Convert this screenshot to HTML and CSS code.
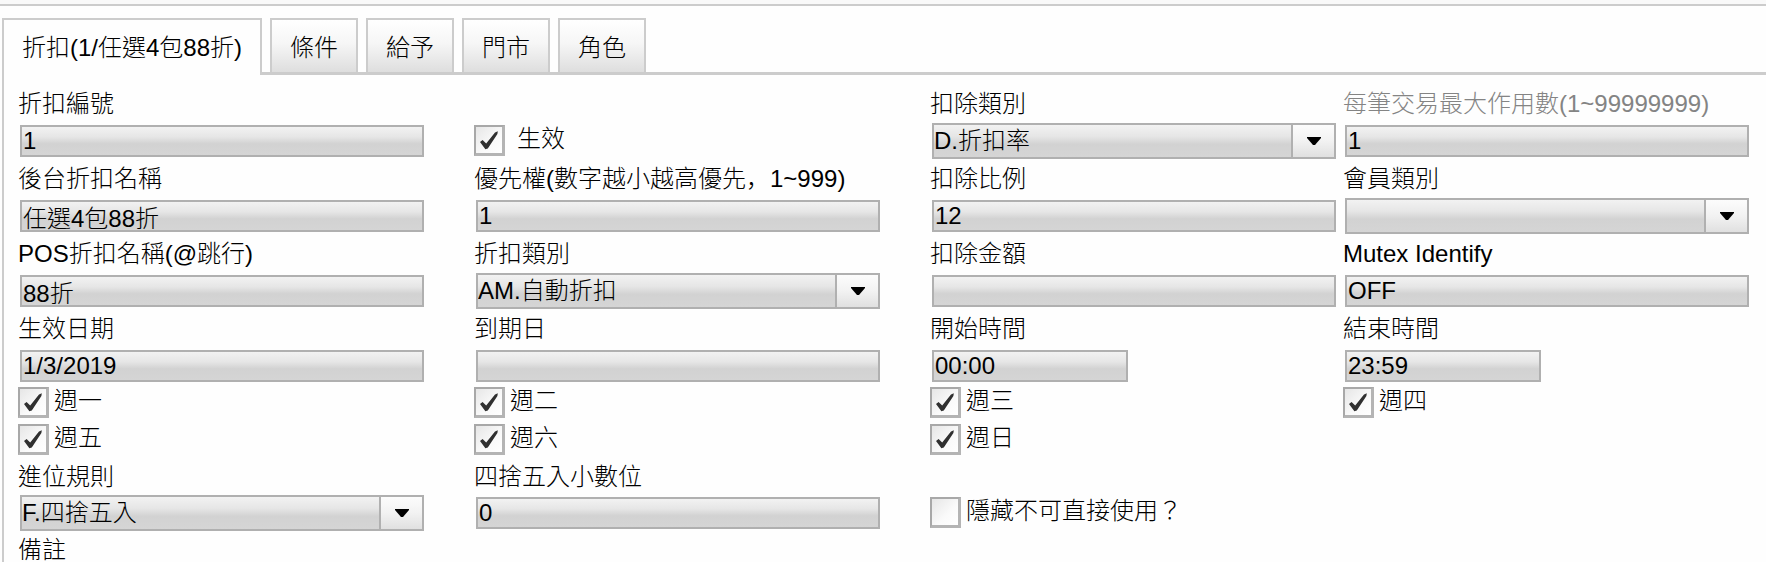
FILE: index.html
```html
<!DOCTYPE html>
<html lang="zh-Hant">
<head>
<meta charset="utf-8">
<title>折扣</title>
<link rel="stylesheet" href="styles.css">
</head>
<body>
<svg class="sprite" aria-hidden="true">
  <symbol id="down" viewBox="0 0 14 8"><path d="M0 0h14v1L8 8H6L0 1z"/></symbol>
</svg>
<header class="topbar"></header>
<nav class="tabs" role="tablist">
  <button class="tab tab--active" role="tab" aria-selected="true">折扣(1/任選4包88折)</button>
  <button class="tab" role="tab">條件</button>
  <button class="tab" role="tab">給予</button>
  <button class="tab" role="tab">門市</button>
  <button class="tab" role="tab">角色</button>
</nav>
<main class="panel">
<form class="form">
  <div class="cell cell--wide">
    <label class="label" for="code">折扣編號</label>
    <div class="control"><input class="field" id="code" value="1"></div>
  </div>
  <div class="cell cell--wide cell--bottom">
    <label class="check check--spaced"><input class="box" type="checkbox" checked><span class="check-text">生效</span></label>
  </div>
  <div class="cell cell--mid">
    <label class="label" for="dtype">扣除類別</label>
    <div class="control combo"><select class="field field--select" id="dtype"><option>D.折扣率</option></select><span class="combo-button"><svg class="arrow"><use href="#down"/></svg></span></div>
  </div>
  <div class="cell">
    <label class="label label--muted" for="max">每筆交易最大作用數(1~99999999)</label>
    <div class="control"><input class="field" id="max" value="1"></div>
  </div>

  <div class="cell cell--wide">
    <label class="label" for="bname">後台折扣名稱</label>
    <div class="control"><input class="field" id="bname" value="任選4包88折"></div>
  </div>
  <div class="cell cell--wide">
    <label class="label" for="prio">優先權(數字越小越高優先<span lang="ja">，</span>1~999)</label>
    <div class="control"><input class="field" id="prio" value="1"></div>
  </div>
  <div class="cell cell--mid">
    <label class="label" for="rate">扣除比例</label>
    <div class="control"><input class="field" id="rate" value="12"></div>
  </div>
  <div class="cell">
    <label class="label" for="member">會員類別</label>
    <div class="control combo"><select class="field field--select" id="member"><option></option></select><span class="combo-button"><svg class="arrow"><use href="#down"/></svg></span></div>
  </div>

  <div class="cell cell--wide">
    <label class="label" for="pname">POS折扣名稱(@跳行)</label>
    <div class="control"><input class="field" id="pname" value="88折"></div>
  </div>
  <div class="cell cell--wide">
    <label class="label" for="kind">折扣類別</label>
    <div class="control combo"><select class="field field--select" id="kind"><option>AM.自動折扣</option></select><span class="combo-button"><svg class="arrow"><use href="#down"/></svg></span></div>
  </div>
  <div class="cell cell--mid">
    <label class="label" for="amount">扣除金額</label>
    <div class="control"><input class="field" id="amount" value=""></div>
  </div>
  <div class="cell">
    <label class="label" for="mutex">Mutex Identify</label>
    <div class="control"><input class="field" id="mutex" value="OFF"></div>
  </div>

  <div class="cell cell--wide">
    <label class="label" for="from">生效日期</label>
    <div class="control"><input class="field" id="from" value="1/3/2019"></div>
  </div>
  <div class="cell cell--wide">
    <label class="label" for="to">到期日</label>
    <div class="control"><input class="field" id="to" value=""></div>
  </div>
  <div class="cell cell--mid">
    <label class="label" for="start">開始時間</label>
    <div class="control"><input class="field field--time" id="start" value="00:00"></div>
  </div>
  <div class="cell">
    <label class="label" for="end">結束時間</label>
    <div class="control"><input class="field field--time" id="end" value="23:59"></div>
  </div>

  <label class="check"><input class="box" type="checkbox" checked><span class="check-text">週一</span></label>
  <label class="check"><input class="box" type="checkbox" checked><span class="check-text">週二</span></label>
  <label class="check"><input class="box" type="checkbox" checked><span class="check-text">週三</span></label>
  <label class="check"><input class="box" type="checkbox" checked><span class="check-text">週四</span></label>
  <label class="check"><input class="box" type="checkbox" checked><span class="check-text">週五</span></label>
  <label class="check"><input class="box" type="checkbox" checked><span class="check-text">週六</span></label>
  <label class="check check--last"><input class="box" type="checkbox" checked><span class="check-text">週日</span></label>

  <div class="cell cell--wide">
    <label class="label label--tight" for="round">進位規則</label>
    <div class="control combo"><select class="field field--select" id="round"><option>F.四捨五入</option></select><span class="combo-button"><svg class="arrow"><use href="#down"/></svg></span></div>
  </div>
  <div class="cell cell--wide">
    <label class="label label--tight" for="digits">四捨五入小數位</label>
    <div class="control"><input class="field" id="digits" value="0"></div>
  </div>
  <div class="cell cell--last cell--bottom">
    <label class="check"><input class="box" type="checkbox"><span class="check-text">隱藏不可直接使用？</span></label>
  </div>

  <div class="cell">
    <span class="label label--tight">備註</span>
  </div>
</form>
</main>
</body>
</html>
```
FILE: styles.css
```css
* {
  box-sizing: border-box;
}

html {
  overflow: hidden;
}

body {
  margin: 0;
  background: #fefefe;
  color: #000;
  font-family: "Liberation Sans", "Noto Sans CJK TC", sans-serif;
  font-size: 24px;
  font-weight: 300;
  line-height: 28px;
}

button,
input,
select {
  font: inherit;
  color: inherit;
}

.sprite {
  display: none;
}

.topbar {
  height: 6px;
  background: #f9f9f9;
  border-bottom: 2px solid #ccc;
}

.tabs {
  display: flex;
  align-items: flex-start;
  gap: 8px;
  padding: 12px 0 0 2px;
}

.tab {
  height: 56px;
  margin: 0;
  padding: 3px 18px 0;
  border: 2px solid #ccc;
  background: linear-gradient(#fff, #f6f6f6 45%, #dedede);
}

.tab--active {
  position: relative;
  height: 57px;
  padding-top: 0;
  border-bottom: 0;
  background: #fefefe;
}

.panel {
  margin: -3px 0 0 2px;
  border-top: 3px solid #ccc;
  border-left: 2px solid #ccc;
  padding: 9px 15px 0 14px;
}

.form {
  display: grid;
  grid-template-columns: 456fr 456fr 413fr 408fr;
}

.cell {
  display: flex;
  flex-direction: column;
  min-width: 0;
  padding-right: 2px;
}

.cell--wide {
  padding-right: 50px;
}

.cell--mid {
  padding-right: 7px;
}

.cell--bottom {
  justify-content: flex-end;
}

.cell--last,
.check--last {
  grid-column: 3 / span 2;
}

.label {
  height: 39px;
  line-height: 39px;
  white-space: nowrap;
}

.label--tight {
  height: 37px;
  line-height: 37px;
}

.label--muted {
  color: #848484;
}

.control {
  display: flex;
  align-items: center;
  height: 36px;
  margin-left: 2px;
}

.field {
  width: 100%;
  height: 32px;
  margin: 0;
  padding: 0 1px;
  border: 2px solid #b0b0b0;
  border-radius: 0;
  outline: 0;
  background: linear-gradient(#f2f2f2, #e6e6e6 35%, #d2d2d2 60%, #d5d5d5);
}

.field--time {
  width: 196px;
}

.combo {
  position: relative;
}

.field--select {
  height: 36px;
  padding: 0 46px 0 0;
  appearance: none;
}

.combo-button {
  position: absolute;
  top: 0;
  right: 0;
  display: flex;
  align-items: center;
  justify-content: center;
  width: 45px;
  height: 36px;
  padding-left: 1px;
  border: 2px solid #b0b0b0;
  background: linear-gradient(#fcfcfc, #f2f2f2 50%, #e0e0e0);
  pointer-events: none;
}

.arrow {
  width: 14px;
  height: 8px;
}

.check {
  display: flex;
  align-items: center;
  gap: 5px;
  height: 37px;
}

.check--spaced {
  gap: 12px;
}

.check-text {
  padding-bottom: 4px;
}

.box {
  display: grid;
  place-items: center;
  width: 31px;
  height: 31px;
  margin: 0;
  border: 2px solid #a8a8a8;
  border-right: 3px solid #b4b4b4;
  border-bottom: 3px solid #b4b4b4;
  background: linear-gradient(135deg, #e6e6e6, #fafafa 60%, #fff);
  appearance: none;
}

.box:checked::before {
  content: "";
  width: 20px;
  height: 20px;
  background: #303030;
  clip-path: polygon(5% 60%, 18% 50%, 36% 68%, 80% 12%, 94% 6%, 92% 20%, 44% 92%, 32% 96%);
}
```
